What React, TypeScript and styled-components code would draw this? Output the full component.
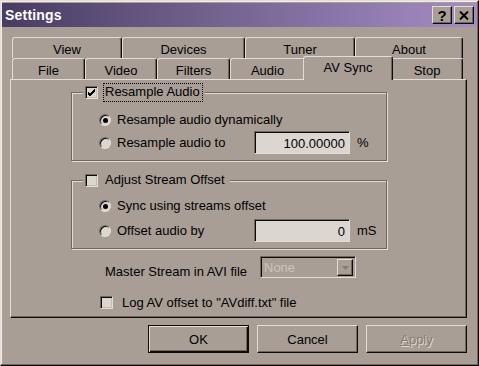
import React from 'react';
import styled, { createGlobalStyle, css } from 'styled-components';

const face = '#a89e96';
const light = '#e4ddd6';
const shadow = '#6f665f';
const dark = '#0e0b09';
const field = '#dcd6d0';

const GlobalStyle = createGlobalStyle`
  html, body {
    margin: 0;
    padding: 0;
    background: ${face};
  }
  body {
    font-family: 'Liberation Sans', Arial, sans-serif;
    font-size: 13px;
    color: #000;
  }
`;

const Window = styled.div`
  width: 479px;
  height: 366px;
  box-sizing: border-box;
  padding: 1px;
  background: ${face};
  border-top: 1px solid ${light};
  border-left: 1px solid ${light};
  border-right: 1px solid ${dark};
  border-bottom: 1px solid ${dark};
  box-shadow: inset -1px -1px 0 ${shadow}, inset 1px 1px 0 #f2ede8;
  display: flex;
  flex-direction: column;
`;

const TitleBar = styled.div`
  height: 24px;
  margin-top: 1px;
  display: flex;
  align-items: center;
  justify-content: space-between;
  padding: 0 3px;
  background: linear-gradient(to right, #483c62, #6e5f8a 40%, #a58cc4);
`;

const Title = styled.span`
  color: #fff;
  font-weight: bold;
  font-size: 14px;
  letter-spacing: 0.2px;
`;

const CaptionButtons = styled.div`
  display: flex;
  gap: 2px;
`;

const CaptionButton = styled.div`
  width: 20px;
  height: 18px;
  box-sizing: border-box;
  background: ${face};
  border-top: 1px solid ${light};
  border-left: 1px solid ${light};
  border-right: 1px solid ${dark};
  border-bottom: 1px solid ${dark};
  box-shadow: inset -1px -1px 0 ${shadow};
  display: flex;
  align-items: center;
  justify-content: center;
  font-weight: bold;
  font-size: 15px;
  line-height: 1;
`;

const Body = styled.div`
  flex: 1;
  display: flex;
  flex-direction: column;
  padding: 10px 0 0 8px;
`;

const TabStrip = styled.div`
  display: flex;
  flex-direction: column;
  margin-left: 2px;
  position: relative;
  z-index: 1;
`;

const TabRow = styled.div`
  display: flex;
  align-items: flex-end;
  height: 21px;
`;

const Tab = styled.div<{ $w: number; $selected?: boolean }>`
  width: ${(p) => p.$w}px;
  height: 21px;
  box-sizing: border-box;
  flex: none;
  display: flex;
  align-items: center;
  justify-content: center;
  padding-top: 2px;
  background: ${face};
  border-top: 1px solid ${light};
  border-left: 1px solid ${light};
  border-right: 1px solid ${dark};
  border-radius: 3px 3px 0 0;
  box-shadow: inset -1px 0 0 ${shadow};
  ${(p) =>
    p.$selected &&
    css`
      width: ${p.$w + 4}px;
      height: 24px;
      margin: 0 -2px -1px;
      padding-top: 0;
      padding-bottom: 3px;
      position: relative;
      z-index: 2;
    `}
`;

const Panel = styled.div`
  width: 457px;
  height: 239px;
  box-sizing: border-box;
  padding: 3px 0 0 60px;
  border-top: 1px solid ${light};
  border-left: 1px solid ${light};
  border-right: 1px solid ${dark};
  border-bottom: 1px solid ${dark};
  box-shadow: inset -1px -1px 0 ${shadow};
  display: flex;
  flex-direction: column;
`;

const Group = styled.fieldset<{ $padTop: number; $gap: number; $mt: number }>`
  width: 316px;
  box-sizing: border-box;
  margin: ${(p) => p.$mt}px 0 0;
  padding: ${(p) => p.$padTop}px 0 6px 0;
  border: 1px solid ${shadow};
  box-shadow: inset 1px 1px 0 ${light}, 1px 1px 0 ${light};
  display: flex;
  flex-direction: column;
  gap: ${(p) => p.$gap}px;
  min-inline-size: 0;
`;

const Legend = styled.legend`
  margin-left: 11px;
  padding: 0 2px;
  height: 18px;
  display: flex;
  align-items: center;
  gap: 5px;
  background: ${face};
`;

const Focus = styled.span<{ $focus?: boolean }>`
  padding: 1px 2px 2px 1px;
  border: 1px dotted ${(p) => (p.$focus ? '#000' : 'transparent')};
  line-height: 14px;
`;

const CheckBox = styled.span`
  width: 13px;
  height: 13px;
  box-sizing: border-box;
  flex: none;
  background: ${field};
  border-top: 1px solid ${shadow};
  border-left: 1px solid ${shadow};
  border-right: 1px solid ${light};
  border-bottom: 1px solid ${light};
  box-shadow: inset 1px 1px 0 ${dark}, inset -1px -1px 0 #c4bcb4;
  display: flex;
  align-items: center;
  justify-content: center;
`;

const Row = styled.div`
  height: 23px;
  padding-left: 27px;
  display: flex;
  align-items: center;
`;

const Radio = styled.span<{ $on?: boolean }>`
  width: 12px;
  height: 12px;
  box-sizing: border-box;
  flex: none;
  border-radius: 50%;
  background: ${field};
  border: 1px solid;
  border-color: ${shadow} ${light} ${light} ${shadow};
  box-shadow: inset 1px 1px 0 ${dark};
  display: flex;
  align-items: center;
  justify-content: center;
  margin-right: 6px;
  &::after {
    content: '';
    width: 5px;
    height: 5px;
    border-radius: 50%;
    background: ${(p) => (p.$on ? '#000' : 'transparent')};
    margin: 1px 0 0 1px;
  }
`;

const RadioLabel = styled.span<{ $w?: number }>`
  ${(p) => p.$w && `width: ${p.$w}px;`}
  white-space: nowrap;
`;

const Field = styled.div`
  width: 96px;
  height: 23px;
  box-sizing: border-box;
  background: ${field};
  border-top: 1px solid ${shadow};
  border-left: 1px solid ${shadow};
  border-right: 1px solid ${light};
  border-bottom: 1px solid ${light};
  box-shadow: inset 1px 1px 0 ${dark};
  display: flex;
  align-items: center;
  justify-content: flex-end;
  padding: 1px 4px 0 0;
`;

const Unit = styled.span`
  margin-left: 7px;
`;

const MasterRow = styled.div`
  height: 22px;
  margin-top: 7px;
  padding-left: 34px;
  display: flex;
  align-items: center;
`;

const MasterLabel = styled.span`
  width: 155px;
  padding-top: 9px;
`;

const Combo = styled.div`
  width: 96px;
  height: 22px;
  box-sizing: border-box;
  background: ${face};
  border-top: 1px solid ${shadow};
  border-left: 1px solid ${shadow};
  border-right: 1px solid ${light};
  border-bottom: 1px solid ${light};
  box-shadow: inset 1px 1px 0 ${dark};
  display: flex;
  align-items: center;
  justify-content: space-between;
  padding: 2px 2px 1px 3px;
  color: #cbc4bd;
`;

const ComboArrow = styled.span`
  width: 16px;
  height: 17px;
  box-sizing: border-box;
  background: ${face};
  border-top: 1px solid ${light};
  border-left: 1px solid ${light};
  border-right: 1px solid ${dark};
  border-bottom: 1px solid ${dark};
  box-shadow: inset -1px -1px 0 ${shadow};
  display: flex;
  align-items: center;
  justify-content: center;
`;

const LogRow = styled.div`
  height: 20px;
  margin-top: 14px;
  padding-left: 29px;
  display: flex;
  align-items: center;
  gap: 9px;
`;

const ButtonBar = styled.div`
  width: 457px;
  display: flex;
  justify-content: flex-end;
  gap: 8px;
  margin-top: 7px;
`;

const Button = styled.div<{ $default?: boolean; $disabled?: boolean }>`
  width: 101px;
  height: 28px;
  box-sizing: border-box;
  background: ${face};
  border-top: 1px solid ${light};
  border-left: 1px solid ${light};
  border-right: 1px solid ${dark};
  border-bottom: 1px solid ${dark};
  box-shadow: inset -1px -1px 0 ${shadow};
  display: flex;
  align-items: center;
  justify-content: center;
  padding-top: 1px;
  ${(p) =>
    p.$default &&
    css`
      border: 1px solid ${dark};
      box-shadow: inset 1px 1px 0 ${light}, inset -1px -1px 0 ${dark}, inset -2px -2px 0 ${shadow};
    `}
  ${(p) =>
    p.$disabled &&
    css`
      color: #857c75;
      text-shadow: 1px 1px 0 ${light};
    `}
`;

const backTabs = [
  { label: 'View', w: 110 },
  { label: 'Devices', w: 123 },
  { label: 'Tuner', w: 110 },
  { label: 'About', w: 108 },
];

const frontTabs = [
  { label: 'File', w: 73 },
  { label: 'Video', w: 72 },
  { label: 'Filters', w: 73 },
  { label: 'Audio', w: 75 },
  { label: 'AV Sync', w: 86, selected: true },
  { label: 'Stop', w: 72 },
];

const Check = () => (
  <svg width="9" height="9" viewBox="0 0 9 9">
    <path d="M1 4 L3 6 L8 1 M1 5 L3 7 L8 2 M1 6 L3 8 L8 3" stroke="#000" strokeWidth="1" fill="none" />
  </svg>
);

const App: React.FC = () => {
  return (
    <>
      <GlobalStyle />
      <Window>
        <TitleBar>
          <Title>Settings</Title>
          <CaptionButtons>
            <CaptionButton>?</CaptionButton>
            <CaptionButton>
              <svg width="10" height="9" viewBox="0 0 10 9">
                <path d="M1 0.5 L9 8.5 M9 0.5 L1 8.5" stroke="#000" strokeWidth="2" />
              </svg>
            </CaptionButton>
          </CaptionButtons>
        </TitleBar>

        <Body>
          <TabStrip>
            <TabRow>
              {backTabs.map((t) => (
                <Tab key={t.label} $w={t.w}>
                  {t.label}
                </Tab>
              ))}
            </TabRow>
            <TabRow>
              {frontTabs.map((t) => (
                <Tab key={t.label} $w={t.w} $selected={t.selected}>
                  {t.label}
                </Tab>
              ))}
            </TabRow>
          </TabStrip>

          <Panel>
            <Group $padTop={7} $gap={0} $mt={0}>
              <Legend>
                <CheckBox>
                  <Check />
                </CheckBox>
                <Focus $focus>Resample Audio</Focus>
              </Legend>
              <Row>
                <Radio $on />
                <RadioLabel>Resample audio dynamically</RadioLabel>
              </Row>
              <Row>
                <Radio />
                <RadioLabel $w={137}>Resample audio to</RadioLabel>
                <Field>100.00000</Field>
                <Unit>%</Unit>
              </Row>
            </Group>

            <Group $padTop={5} $gap={2} $mt={10}>
              <Legend>
                <CheckBox />
                <Focus>Adjust Stream Offset</Focus>
              </Legend>
              <Row>
                <Radio $on />
                <RadioLabel>Sync using streams offset</RadioLabel>
              </Row>
              <Row>
                <Radio />
                <RadioLabel $w={137}>Offset audio by</RadioLabel>
                <Field>0</Field>
                <Unit>mS</Unit>
              </Row>
            </Group>

            <MasterRow>
              <MasterLabel>Master Stream in AVI file</MasterLabel>
              <Combo>
                <span>None</span>
                <ComboArrow>
                  <svg width="7" height="4" viewBox="0 0 7 4">
                    <path d="M0 0 H7 L3.5 4 Z" fill="#857c75" />
                  </svg>
                </ComboArrow>
              </Combo>
            </MasterRow>

            <LogRow>
              <CheckBox />
              <span>Log AV offset to "AVdiff.txt" file</span>
            </LogRow>
          </Panel>

          <ButtonBar>
            <Button $default>OK</Button>
            <Button>Cancel</Button>
            <Button $disabled>
              <span>
                <u>A</u>pply
              </span>
            </Button>
          </ButtonBar>
        </Body>
      </Window>
    </>
  );
};

export default App;
